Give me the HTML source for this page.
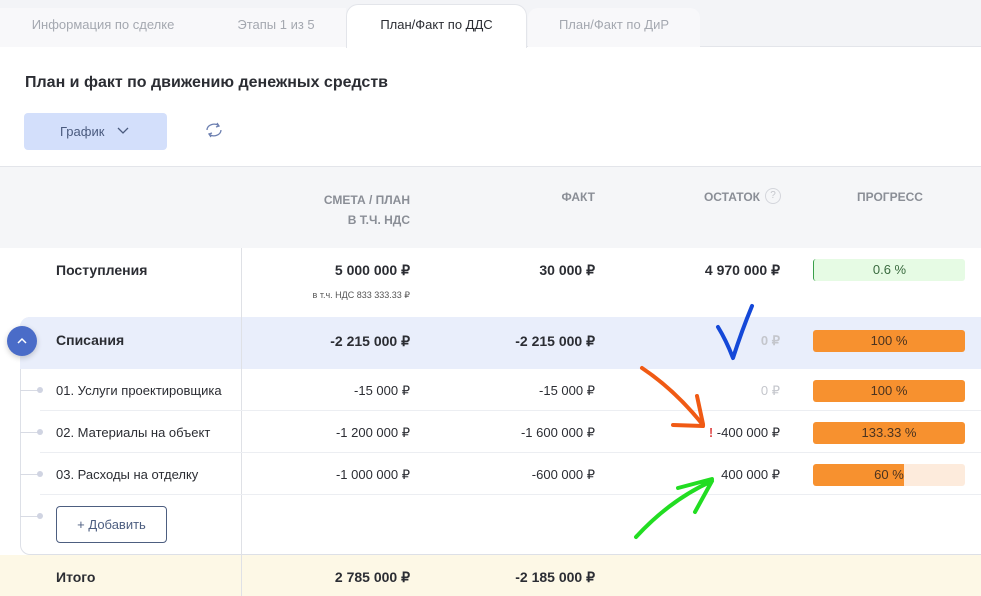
<!DOCTYPE html>
<html><head><meta charset="utf-8"><style>
*{box-sizing:border-box;margin:0;padding:0}
body{width:981px;height:596px;overflow:hidden;background:#fff;font-family:"Liberation Sans",sans-serif;color:#2b2d33;position:relative;font-size:13px}
.a{position:absolute;white-space:nowrap}
.r{text-align:right}
.tab{position:absolute;top:0;height:47px;line-height:50px;font-size:13px;color:#a4a8b0;text-align:center}
.hd{font-size:12px;color:#8a8e96;font-weight:bold}
.bar{position:absolute;left:813px;width:152px;height:22px;border-radius:3px;text-align:center;line-height:22px;font-size:13px;color:#4a3320}
.sep{position:absolute;left:40px;right:0;height:1px;background:#eceef2}
.dot{position:absolute;left:37px;width:6px;height:6px;border-radius:50%;background:#d0d4e2}
.hl{position:absolute;left:20px;width:18px;height:1px;background:#d8dbe4}
</style></head><body>
<div class="a" style="left:0;top:0;width:981px;height:47px;background:#f3f4f7;border-bottom:1px solid #e3e5ea"></div>
<div class="a" style="left:0;top:8px;width:346px;height:39px;background:#f8f8fa;border-radius:0 0 0 0"></div>
<div class="a" style="left:528px;top:8px;width:172px;height:39px;background:#f8f8fa;border-radius:10px 10px 0 0"></div>
<div class="tab" style="left:0;width:206px">Информация по сделке</div>
<div class="tab" style="left:206px;width:140px">Этапы 1 из 5</div>
<div class="a" style="left:346px;top:4px;width:181px;height:44px;background:#fff;border:1px solid #e3e5ea;border-bottom:none;border-radius:12px 12px 0 0"></div>
<div class="tab" style="left:346px;width:181px;color:#2b2d33">План/Факт по ДДС</div>
<div class="tab" style="left:528px;width:172px">План/Факт по ДиР</div>

<div class="a" style="left:25px;top:74px;font-size:16px;font-weight:bold;color:#2b2d33">План и факт по движению денежных средств</div>
<div class="a" style="left:24px;top:113px;width:143px;height:37px;background:#d3dffb;border-radius:4px;color:#4a5a7e;font-size:13px;line-height:37px;padding-left:36px">График <svg width="14" height="10" style="margin-left:8px" viewBox="0 0 14 10"><path d="M2 2l5 5 5-5" fill="none" stroke="#4a5a7e" stroke-width="1.3"/></svg></div>
<svg class="a" style="left:203px;top:120px" width="22" height="20" viewBox="0 0 22 20"><path d="M4 10a7 6 0 0 1 12-4" fill="none" stroke="#6c7fb0" stroke-width="1.3"/><path d="M14 3l2 3-3 1" fill="none" stroke="#6c7fb0" stroke-width="1.3"/><path d="M18 10a7 6 0 0 1-12 4" fill="none" stroke="#6c7fb0" stroke-width="1.3"/><path d="M8 17l-2-3 3-1" fill="none" stroke="#6c7fb0" stroke-width="1.3"/></svg>

<div class="a" style="left:0;top:166px;width:981px;height:82px;background:#f5f6f8;border-top:1px solid #e3e5ea"></div>
<div class="a hd r" style="left:250px;width:160px;top:190px;line-height:20px">СМЕТА / ПЛАН<br>В Т.Ч. НДС</div>
<div class="a hd r" style="left:450px;width:145px;top:190px">ФАКТ</div>
<div class="a hd r" style="left:600px;width:160px;top:190px">ОСТАТОК</div>
<div class="a" style="left:765px;top:188px;width:16px;height:16px;border:1px solid #d4d6dc;border-radius:50%;font-size:10px;color:#c4c6cc;text-align:center;line-height:14px">?</div>
<div class="a hd" style="left:857px;top:190px">ПРОГРЕСС</div>

<div class="a" style="left:241px;top:248px;width:1px;height:348px;background:#dfe1e6"></div>

<div class="a" style="left:56px;top:262px;font-size:14px;font-weight:bold">Поступления</div>
<div class="a r" style="left:250px;width:160px;top:262px;font-size:14px;font-weight:bold">5 000 000 ₽</div>
<div class="a r" style="left:250px;width:160px;top:290px;font-size:9px;color:#555">в т.ч. НДС 833 333.33 ₽</div>
<div class="a r" style="left:450px;width:145px;top:262px;font-size:14px;font-weight:bold">30 000 ₽</div>
<div class="a r" style="left:600px;width:180px;top:262px;font-size:14px;font-weight:bold">4 970 000 ₽</div>
<div class="bar" style="top:259px;background:#e6fbe4;border-left:1px solid #3aa04a;color:#3a6b3f">0.6 %</div>

<div class="a" style="left:20px;top:317px;width:961px;height:238px;border:1px solid #dde0e7;border-right:none;border-radius:10px 0 0 10px"></div>
<div class="a" style="left:20px;top:317px;width:961px;height:52px;background:#e9eefb;border-radius:10px 0 0 0"></div>
<div class="a" style="left:241px;top:317px;width:1px;height:238px;background:#dfe1e6"></div>
<div class="a" style="left:7px;top:326px;width:30px;height:30px;border-radius:50%;background:#4a6cc8;box-shadow:0 2px 6px rgba(0,0,0,.2)"><svg width="30" height="30" viewBox="0 0 30 30"><path d="M11 17l4-4 4 4" fill="none" stroke="#fff" stroke-width="1.5"/></svg></div>
<div class="a" style="left:56px;top:332px;font-size:14px;font-weight:bold">Списания</div>
<div class="a r" style="left:250px;width:160px;top:333px;font-size:14px;font-weight:bold">-2 215 000 ₽</div>
<div class="a r" style="left:450px;width:145px;top:333px;font-size:14px;font-weight:bold">-2 215 000 ₽</div>
<div class="a r" style="left:600px;width:180px;top:333px;font-size:13px;font-weight:bold;color:#c4c6cc">0 ₽</div>
<div class="bar" style="top:330px;background:#f7912f">100 %</div>

<div class="hl" style="top:390px"></div><div class="dot" style="top:387px"></div>
<div class="hl" style="top:432px"></div><div class="dot" style="top:429px"></div>
<div class="hl" style="top:474px"></div><div class="dot" style="top:471px"></div>
<div class="hl" style="top:516px"></div><div class="dot" style="top:513px"></div>
<div class="sep" style="top:410px"></div><div class="sep" style="top:452px"></div><div class="sep" style="top:494px"></div>

<div class="a" style="left:56px;top:383px">01. Услуги проектировщика</div>
<div class="a r" style="left:250px;width:160px;top:383px">-15 000 ₽</div>
<div class="a r" style="left:450px;width:145px;top:383px">-15 000 ₽</div>
<div class="a r" style="left:600px;width:180px;top:383px;color:#c4c6cc">0 ₽</div>
<div class="bar" style="top:380px;background:#f7912f">100 %</div>

<div class="a" style="left:56px;top:425px">02. Материалы на объект</div>
<div class="a r" style="left:250px;width:160px;top:425px">-1 200 000 ₽</div>
<div class="a r" style="left:450px;width:145px;top:425px">-1 600 000 ₽</div>
<div class="a r" style="left:600px;width:180px;top:425px"><span style="color:#e05050;font-weight:bold">!</span> -400 000 ₽</div>
<div class="bar" style="top:422px;background:#f7912f">133.33 %</div>

<div class="a" style="left:56px;top:467px">03. Расходы на отделку</div>
<div class="a r" style="left:250px;width:160px;top:467px">-1 000 000 ₽</div>
<div class="a r" style="left:450px;width:145px;top:467px">-600 000 ₽</div>
<div class="a r" style="left:600px;width:180px;top:467px">400 000 ₽</div>
<div class="bar" style="top:464px;background:linear-gradient(90deg,#f7912f 0 60%,#fdebdc 60%)">60 %</div>

<div class="a" style="left:56px;top:506px;width:111px;height:37px;border:1px solid #4d5e80;border-radius:4px;color:#4d5e80;text-align:center;line-height:35px">+ Добавить</div>

<div class="a" style="left:0;top:555px;width:981px;height:41px;background:#fdf8e6"></div>
<div class="a" style="left:241px;top:555px;width:1px;height:41px;background:#dfe1e6"></div>
<div class="a" style="left:56px;top:569px;font-size:14px;font-weight:bold">Итого</div>
<div class="a r" style="left:250px;width:160px;top:569px;font-size:14px;font-weight:bold">2 785 000 ₽</div>
<div class="a r" style="left:450px;width:145px;top:569px;font-size:14px;font-weight:bold">-2 185 000 ₽</div>

<svg class="a" style="left:0;top:0" width="981" height="596" viewBox="0 0 981 596">
<path d="M718 327 Q726 340 733 358 Q742 330 752 306" fill="none" stroke="#1448d8" stroke-width="4" stroke-linecap="round" stroke-linejoin="round"/>
<path d="M642 368 Q675 390 703 425 M673 425 L703 426 M697 396 L703 424" fill="none" stroke="#f05a14" stroke-width="4" stroke-linecap="round"/>
<path d="M636 537 Q670 500 712 481 M678 488 L712 479 M695 512 L712 481" fill="none" stroke="#22dd22" stroke-width="4" stroke-linecap="round"/>
</svg>
</body></html>
